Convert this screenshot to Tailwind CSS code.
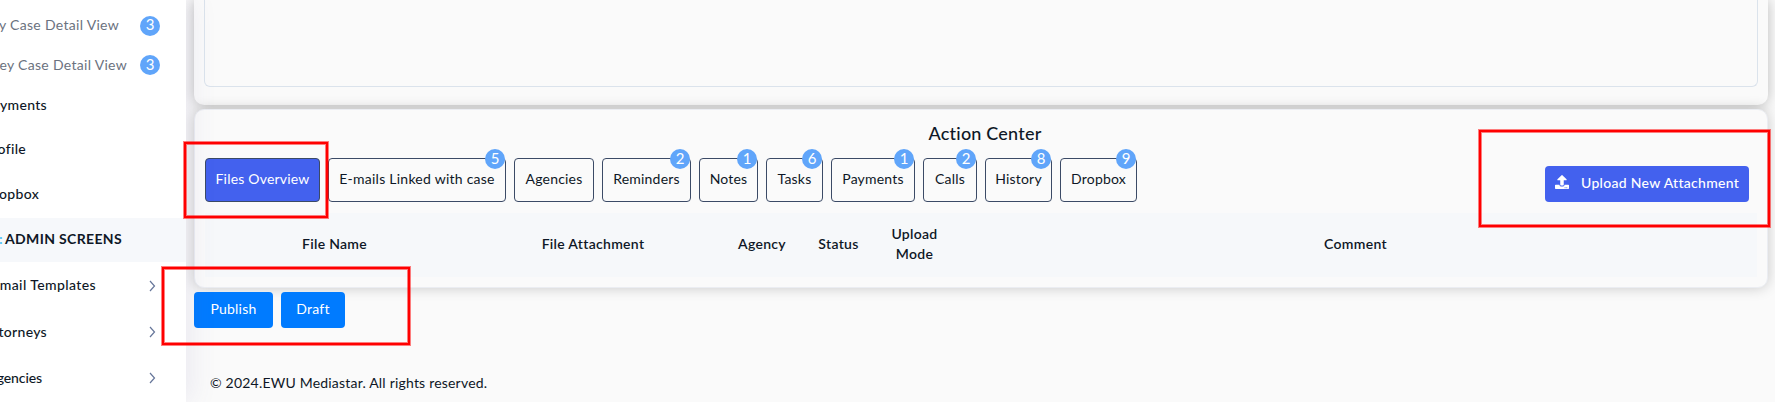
<!DOCTYPE html>
<html lang="en">
<head>
    <meta charset="UTF-8">
    <meta name="viewport" content="width=device-width, initial-scale=1.0">
    <title>Action Center</title>
    <script src="https://cdn.jsdelivr.net/npm/@tailwindcss/browser@4"></script>
</head>

<body class="relative flex h-[402px] w-[1775px] overflow-hidden bg-[#fafafa] font-['Lato',sans-serif] text-sm tracking-[0.2px] text-[#0e1726] [font-variant-ligatures:none]">

    <!-- Sidebar -->
    <aside class="relative z-10 flex w-[186px] shrink-0 flex-col bg-white font-medium tracking-[0.3px] shadow-[5px_0_25px_0_rgba(94,92,154,0.1)]">
        <div class="flex h-[45px] items-center justify-end pt-[6px] pr-[26px] font-normal text-[#6b7280]">
            <span class="mr-[21px] pb-px whitespace-nowrap">y Case Detail View</span>
            <span class="flex h-5 w-5 shrink-0 items-center justify-center rounded-full bg-[#60a5fa] pb-px text-[15px] tracking-normal text-white">3</span>
        </div>
        <div class="flex h-10 items-center justify-end pr-[26px] font-normal text-[#6b7280]">
            <span class="mr-[13px] whitespace-nowrap">ey Case Detail View</span>
            <span class="flex h-5 w-5 shrink-0 items-center justify-center rounded-full bg-[#60a5fa] pb-px text-[15px] tracking-normal text-white">3</span>
        </div>
        <div class="flex h-10 w-[47px] items-center justify-end">yments</div>
        <div class="flex h-12 w-[26px] items-center justify-end">ofile</div>
        <div class="flex h-[45px] w-[39px] items-center justify-end pb-1">opbox</div>
        <div class="flex h-11 items-center bg-[#f6f8fb] pb-0.5 font-bold">
            <span class="-ml-px w-[6px] shrink-0 text-[#4fc3f7]">:</span>
            <span class="whitespace-nowrap tracking-[0.35px]">ADMIN SCREENS</span>
        </div>
        <div class="flex h-[48px] items-center justify-between pr-[30px]">
            <span class="flex w-[96px] justify-end pb-0.5 tracking-[0.4px] whitespace-nowrap">mail Templates</span>
            <svg class="h-[12px] w-[8px] text-[#66769a]" viewBox="0 0 8 12" fill="none" stroke="currentColor" stroke-width="1.2"><path d="M2 1l4.500 5L2 11" /></svg>
        </div>
        <div class="flex h-[46px] items-center justify-between pr-[30px] pb-0.5">
            <span class="flex w-[47px] justify-end pb-px whitespace-nowrap">torneys</span>
            <svg class="h-[12px] w-[8px] text-[#66769a]" viewBox="0 0 8 12" fill="none" stroke="currentColor" stroke-width="1.2"><path d="M2 1l4.500 5L2 11" /></svg>
        </div>
        <div class="flex h-[46px] items-center justify-between pr-[30px] pb-0.5">
            <span class="flex w-[42px] justify-end pb-px tracking-[-0.1px] whitespace-nowrap">gencies</span>
            <svg class="h-[12px] w-[8px] text-[#66769a]" viewBox="0 0 8 12" fill="none" stroke="currentColor" stroke-width="1.2"><path d="M2 1l4.500 5L2 11" /></svg>
        </div>
    </aside>

    <!-- Content -->
    <main class="flex w-[1589px] flex-col pl-2">
        <section class="h-[105px] w-[1574px] shrink-0 rounded-b-[10px] bg-[#fafafa] px-[10px] shadow-[0_0_14px_rgba(0,0,0,0.25)]">
            <div class="h-[87px] rounded-b-md border border-t-0 border-[#dbe3ec]"></div>
        </section>

        <section class="mt-1 h-[179px] w-[1574px] shrink-0 rounded-[10px] border border-[#ebedf2] bg-[#fafafa] px-[10px] shadow-[0_0_14px_rgba(0,0,0,0.2)]">
            <h5 class="flex h-[48px] items-center justify-center pb-0.5 pl-[8px] text-lg font-medium">Action Center</h5>
            <div class="flex items-start justify-between">
                <div class="flex gap-2">
                    <button class="relative h-11 w-[115px] rounded border border-[#3b4a66] bg-[#4361ee] pb-0.5 text-white">Files Overview</button>
                    <button class="relative h-11 w-[178px] rounded border border-[#3b4a66] pb-0.5 tracking-[0.25px]">E-mails Linked with case<span class="absolute -top-[10px] right-0 flex h-5 w-5 items-center justify-center rounded-full bg-[#60a5fa] pb-px text-[15px] tracking-normal text-white">5</span></button>
                    <button class="relative h-11 w-20 rounded border border-[#3b4a66] pb-0.5">Agencies</button>
                    <button class="relative h-11 w-[89px] rounded border border-[#3b4a66] pb-0.5">Reminders<span class="absolute -top-[10px] right-0 flex h-5 w-5 items-center justify-center rounded-full bg-[#60a5fa] pb-px text-[15px] tracking-normal text-white">2</span></button>
                    <button class="relative h-11 w-[59px] rounded border border-[#3b4a66] pb-0.5">Notes<span class="absolute -top-[10px] right-0 flex h-5 w-5 items-center justify-center rounded-full bg-[#60a5fa] pb-px text-[15px] tracking-normal text-white">1</span></button>
                    <button class="relative h-11 w-[57px] rounded border border-[#3b4a66] pb-0.5">Tasks<span class="absolute -top-[10px] right-0 flex h-5 w-5 items-center justify-center rounded-full bg-[#60a5fa] pb-px text-[15px] tracking-normal text-white">6</span></button>
                    <button class="relative h-11 w-[84px] rounded border border-[#3b4a66] pb-0.5">Payments<span class="absolute -top-[10px] right-0 flex h-5 w-5 items-center justify-center rounded-full bg-[#60a5fa] pb-px text-[15px] tracking-normal text-white">1</span></button>
                    <button class="relative h-11 w-[54px] rounded border border-[#3b4a66] pb-0.5">Calls<span class="absolute -top-[10px] right-0 flex h-5 w-5 items-center justify-center rounded-full bg-[#60a5fa] pb-px text-[15px] tracking-normal text-white">2</span></button>
                    <button class="relative h-11 w-[67px] rounded border border-[#3b4a66] pb-0.5">History<span class="absolute -top-[10px] right-0 flex h-5 w-5 items-center justify-center rounded-full bg-[#60a5fa] pb-px text-[15px] tracking-normal text-white">8</span></button>
                    <button class="relative h-11 w-[77px] rounded border border-[#3b4a66] pb-0.5">Dropbox<span class="absolute -top-[10px] right-0 flex h-5 w-5 items-center justify-center rounded-full bg-[#60a5fa] pb-px text-[15px] tracking-normal text-white">9</span></button>
                </div>
                <button class="mt-2 mr-2 flex h-9 w-[204px] items-center rounded bg-[#4361ee] pb-0.5 pl-[10px] font-medium tracking-[0.3px] whitespace-nowrap text-white">
                    <svg class="mr-3 mb-[3px] h-[14px] w-[14px] shrink-0" viewBox="0 0 512 512" fill="currentColor"><path d="M296 384h-80c-13.300 0-24-10.700-24-24V192h-87.700c-17.800 0-26.700-21.500-14.100-34.100L242.300 5.700c7.500-7.500 19.800-7.500 27.300 0l152.200 152.200c12.600 12.600 3.700 34.100-14.100 34.100H320v168c0 13.300-10.700 24-24 24zm216-8v112c0 13.300-10.700 24-24 24H24c-13.300 0-24-10.700-24-24V376c0-13.300 10.700-24 24-24h136v8c0 30.900 25.100 56 56 56h80c30.900 0 56-25.100 56-56v-8h136c13.300 0 24 10.700 24 24zm-124 88c0-11-9-20-20-20s-20 9-20 20 9 20 20 20 20-9 20-20zm64 0c0-11-9-20-20-20s-20 9-20 20 9 20 20 20 20-9 20-20z" /></svg>
                    Upload New Attachment
                </button>
            </div>
            <table class="mt-[11px] w-full table-fixed bg-[#f6f8fa] text-center leading-5 tracking-[0.3px]">
                <thead>
                    <tr class="h-16">
                        <th class="w-[259px] p-0 pb-0.5 font-semibold">File Name</th>
                        <th class="w-[258px] p-0 pb-0.5 font-semibold">File Attachment</th>
                        <th class="w-[80px] p-0 pb-0.5 font-semibold">Agency</th>
                        <th class="w-[73px] p-0 pb-0.5 font-semibold">Status</th>
                        <th class="w-[79px] px-3 pb-0.5 font-semibold">Upload Mode</th>
                        <th class="p-0 pb-0.5 font-semibold">Comment</th>
                    </tr>
                </thead>
            </table>
        </section>

        <div class="mt-1 flex gap-2 text-white">
            <button class="h-9 w-[79px] rounded bg-[#007bff] pb-0.5">Publish</button>
            <button class="h-9 w-16 rounded bg-[#007bff] pb-0.5">Draft</button>
        </div>

        <footer class="mt-[45px] pl-4">© 2024.EWU Mediastar. All rights reserved.</footer>
    </main>

    <!-- Highlight boxes -->
    <div class="absolute top-[142px] left-[184px] z-20 h-[76px] w-[144px] border-2 border-[#ff0000] ring-1 ring-[#ff0000]/50 inset-ring inset-ring-[#ff0000]/50"></div>
    <div class="absolute top-[267px] left-[162px] z-20 h-[78px] w-[248px] border-2 border-[#ff0000] ring-1 ring-[#ff0000]/50 inset-ring inset-ring-[#ff0000]/50"></div>
    <div class="absolute top-[130px] left-[1479px] z-20 h-[97px] w-[291px] border-2 border-[#ff0000] ring-1 ring-[#ff0000]/50 inset-ring inset-ring-[#ff0000]/50"></div>
</body>
</html>
